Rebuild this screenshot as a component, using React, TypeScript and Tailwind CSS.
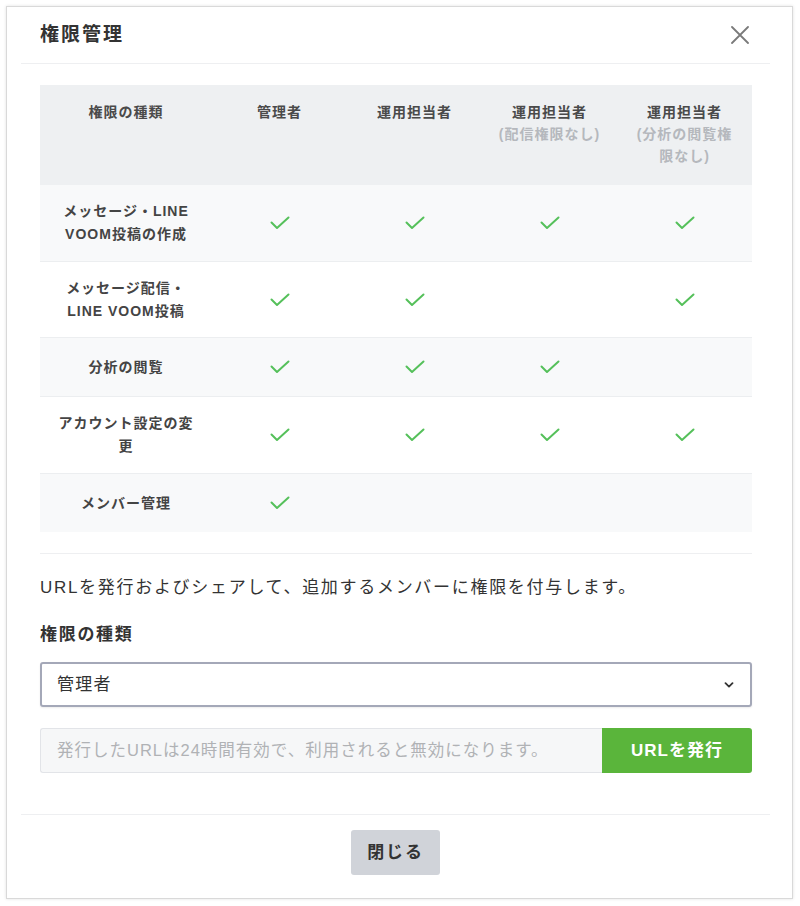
import React from "react"

const font = "font-['Liberation_Sans','Noto_Sans_CJK_JP',sans-serif]"

type Row = {
  label: string[]
  h:     string
  tint:  boolean
  marks: boolean[]
}

const columns: { title: string; note?: string[] }[] = [
  { title: "管理者" },
  { title: "運用担当者" },
  { title: "運用担当者", note: ["(配信権限なし)"] },
  { title: "運用担当者", note: ["(分析の閲覧権", "限なし)"] },
]

const rows: Row[] = [
  { label: ["メッセージ・LINE", "VOOM投稿の作成"], h: "h-[77px]", tint: true,  marks: [true, true, true, true] },
  { label: ["メッセージ配信・", "LINE VOOM投稿"],  h: "h-[76px]", tint: false, marks: [true, true, false, true] },
  { label: ["分析の閲覧"],                         h: "h-[59px]", tint: true,  marks: [true, true, true, false] },
  { label: ["アカウント設定の変", "更"],            h: "h-[77px]", tint: false, marks: [true, true, true, true] },
  { label: ["メンバー管理"],                       h: "h-[58px]", tint: true,  marks: [true, false, false, false] },
]

function Check() {
  return (
    <svg width="20" height="14" viewBox="0 0 20 14" fill="none">
      <path d="M1.5 6.5 L7 12 L18.5 1.5" stroke="#55c05a" strokeWidth="2" strokeLinecap="round" strokeLinejoin="round" />
    </svg>
  )
}

function PermissionTable() {
  return (
    <div className="w-[712px]">
      {/* header */}
      <div className="flex h-[100px] bg-[#eef0f2] text-[14px] leading-[22px] tracking-[1px] font-bold text-[#4a4a4a]">
        <div className="w-[172px] px-[16px] pt-[16px] text-center">権限の種類</div>
        {columns.map((c, i) => (
          <div key={i} className="w-[135px] px-[14px] pt-[16px] text-center">
            <div>{c.title}</div>
            {c.note && (
              <div className="text-[#b5b8bd]">
                {c.note.map((n) => <div key={n}>{n}</div>)}
              </div>
            )}
          </div>
        ))}
      </div>

      {rows.map((r, i) => (
        <div
          key={i}
          className={`flex items-center ${r.h} ${r.tint ? "bg-[#f8f9fa]" : "bg-white"} ${i < rows.length - 1 ? "border-b border-[#eceef0]" : ""}`}
        >
          <div className="w-[172px] px-[16px] text-center text-[14px] leading-[23px] tracking-[1px] font-bold text-[#444]">
            {r.label.map((l) => <div key={l}>{l}</div>)}
          </div>
          {r.marks.map((m, j) => (
            <div key={j} className="w-[135px] flex justify-center">
              {m && <Check />}
            </div>
          ))}
        </div>
      ))}
    </div>
  )
}

export default function App() {
  return (
    <div className={`min-h-screen bg-white pt-[6px] pl-[6px] ${font}`}>
      <div className="w-[787px] h-[893px] border border-[#d9d9d9] shadow-[0_0_3px_rgba(0,0,0,0.12)] bg-white">
        <div className="ml-[14px] mr-[22px] flex flex-col">
          {/* header */}
          <div className="h-[57px] border-b border-[#eeeff1] flex items-center justify-between pl-[19px] pr-[21px]">
            <h1 className="text-[19px] tracking-[2px] font-bold text-[#333]">権限管理</h1>
            <button type="button" className="w-[18px] h-[18px]">
              <svg width="18" height="18" viewBox="0 0 18 18" fill="none">
                <path d="M1 1 L17 17 M17 1 L1 17" stroke="#7a7a7a" strokeWidth="1.8" strokeLinecap="round" />
              </svg>
            </button>
          </div>

          {/* body */}
          <div className="pl-[19px] pr-[18px] pt-[21px] pb-[41px] border-b border-[#eeeff1]">
            <PermissionTable />

            <div className="mt-[21px] border-t border-[#eeeff1]" />

            <p className="mt-[22px] text-[17px] leading-[24px] tracking-[1.7px] text-[#333]">
              URLを発行およびシェアして、追加するメンバーに権限を付与します。
            </p>

            <p className="mt-[23px] text-[17px] leading-[24px] tracking-[1.7px] font-bold text-[#333]">権限の種類</p>

            <div className="mt-[15px] h-[45px] border-2 border-[#a4a8b8] rounded-[3px] shadow-[0_1px_2px_rgba(0,0,0,0.08)] flex items-center justify-between pl-[15px] pr-[16px]">
              <span className="text-[17px] tracking-[1.3px] text-[#333]">管理者</span>
              <svg width="10" height="6" viewBox="0 0 10 6" fill="none">
                <path d="M1.5 1.2 L5 4.6 L8.5 1.2" stroke="#333" strokeWidth="1.8" strokeLinecap="round" strokeLinejoin="round" />
              </svg>
            </div>

            <div className="mt-[21px] h-[45px] flex">
              <div className="flex-1 bg-[#f6f7f8] border border-[#e2e4e8] border-r-0 rounded-l-[3px] flex items-center pl-[16px]">
                <span className="text-[16.5px] tracking-[1px] text-[#b0b2b5]">
                  発行したURLは24時間有効で、利用されると無効になります。
                </span>
              </div>
              <button type="button" className="w-[150px] bg-[#5ab53b] rounded-r-[3px] text-white text-[17px] tracking-[1px] font-bold">
                URLを発行
              </button>
            </div>
          </div>

          {/* footer */}
          <div className="pt-[15px] flex justify-center">
            <button type="button" className="w-[89px] h-[45px] bg-[#d0d3d9] rounded-[3px] text-[17px] tracking-[1.8px] font-bold text-[#333]">
              閉じる
            </button>
          </div>
        </div>
      </div>
    </div>
  )
}
